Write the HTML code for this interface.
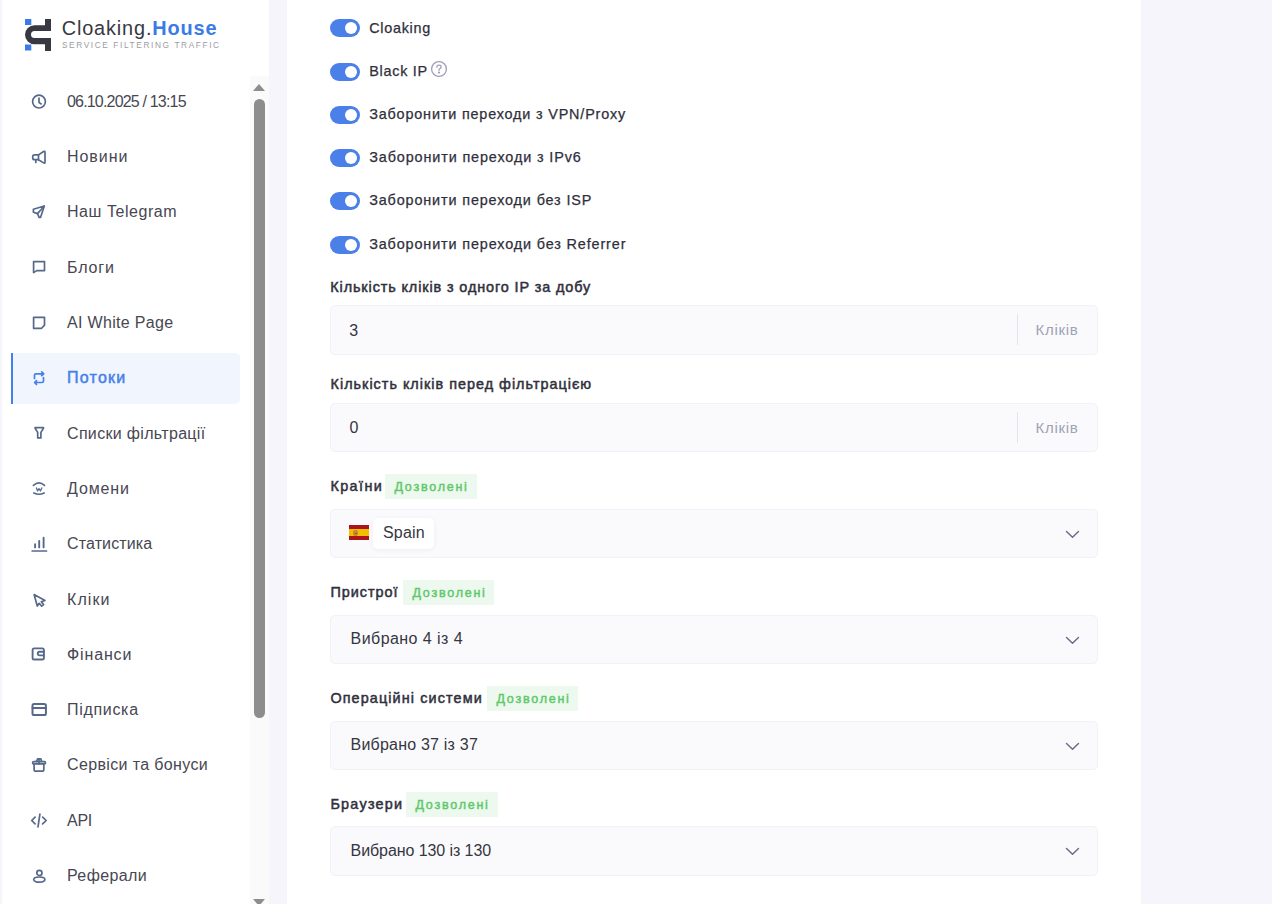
<!DOCTYPE html>
<html><head><meta charset="utf-8">
<style>
*{box-sizing:border-box;margin:0;padding:0}
html,body{width:1272px;height:904px;overflow:hidden;background:#f5f5fb;font-family:"Liberation Sans",sans-serif}
.abs{position:absolute}
.m{position:absolute;white-space:nowrap;line-height:1}
#side{position:absolute;left:2px;top:0;width:267px;height:904px;background:#fff}
#main{position:absolute;left:287px;top:0;width:854px;height:904px;background:#fff}
.track{position:absolute;left:250px;top:76px;width:19px;height:828px;background:#fafafa}
.thumb{position:absolute;left:254px;top:99px;width:11px;height:619px;border-radius:5.5px;background:#8d8d8d}
.nav{color:#474752}
.ico{position:absolute;left:28px;width:22px;height:22px}
.act{position:absolute;left:11px;top:353px;width:229px;height:51px;background:#f0f5fe;border-left:2px solid #4580ea;border-radius:0 5px 5px 0}
.tg{position:absolute;left:330px;width:30px;height:18px;border-radius:9px;background:#4a80e8}
.tg::after{content:"";position:absolute;left:14.6px;top:2.7px;width:12.6px;height:12.6px;border-radius:50%;background:#fff}
.tl{color:#2f2f3b;-webkit-text-stroke:0.25px #2f2f3b}
.lbl{color:#30303c;-webkit-text-stroke:0.5px #30303c}
.badge{position:absolute;background:#edf9ee}
.bdg{color:#5ec86b;-webkit-text-stroke:0.45px #5ec86b}
.inp{position:absolute;left:330px;width:768px;background:#fafafd;border:1px solid #f1f1f7;border-radius:5px}
.val{color:#363641}
.suf{color:#9da2b4}
.logo{color:#373841}
.logo b{font-weight:bold}
.tag{color:#9c9ca3}
</style></head><body>
<div id="side"></div>
<div class="track"></div>
<div class="thumb"></div>
<div class="act"></div>
<div id="main"></div>
<svg class="ico" style="top:90.30px" viewBox="0 0 22 22" fill="none" stroke="#56698a" stroke-width="1.7" stroke-linecap="round" stroke-linejoin="round"><circle cx="11" cy="11.6" r="6.4"/><path d="M11 8.2V12.6L13.2 13.9"/></svg>
<div class="m nav" style="left:67px;top:93.75px;font-size:16px;letter-spacing:-0.818px;">06.10.2025 / 13:15</div>
<svg class="ico" style="top:145.60px" viewBox="0 0 22 22" fill="none" stroke="#56698a" stroke-width="1.7" stroke-linecap="round" stroke-linejoin="round"><path d="M10.5 8.9L15.6 5.5Q17 4.7 17 6.3V16.2Q17 17.8 15.6 16.9L10.5 13.7Z"/><path d="M10.5 8.9H6.6Q4.7 8.9 4.7 10.9V11.7Q4.7 13.7 6.6 13.7H10.5M7.8 13.7V16.4"/></svg>
<div class="m nav" style="left:67px;top:148.75px;font-size:16px;letter-spacing:0.960px;">Новини</div>
<svg class="ico" style="top:200.90px" viewBox="0 0 22 22" fill="none" stroke="#56698a" stroke-width="1.7" stroke-linecap="round" stroke-linejoin="round"><path d="M16.3 5.0L5.4 8.3V11.2L9.5 12.6L11.1 16.3H12.6Z"/><path d="M9.5 12.6L16.1 5.2"/></svg>
<div class="m nav" style="left:67px;top:203.75px;font-size:16px;letter-spacing:0.545px;">Наш Telegram</div>
<svg class="ico" style="top:256.20px" viewBox="0 0 22 22" fill="none" stroke="#56698a" stroke-width="1.7" stroke-linecap="round" stroke-linejoin="round"><path d="M5.6 16.6V5.6H16.5V14.6H8.8Z"/></svg>
<div class="m nav" style="left:67px;top:259.75px;font-size:16px;letter-spacing:0.875px;">Блоги</div>
<svg class="ico" style="top:311.50px" viewBox="0 0 22 22" fill="none" stroke="#56698a" stroke-width="1.7" stroke-linecap="round" stroke-linejoin="round"><path d="M5.6 5.4H16.5V13.1L13.6 16.3H5.6Z"/></svg>
<div class="m nav" style="left:67px;top:314.75px;font-size:16px;letter-spacing:0.325px;">AI White Page</div>
<svg class="ico" style="top:366.80px" viewBox="0 0 22 22" fill="none" stroke="#4580ea" stroke-width="1.7" stroke-linecap="round" stroke-linejoin="round"><path d="M6.5 11.4V8.3Q6.5 6.8 8 6.8H15.6M13.7 4.9L15.7 6.8L13.7 8.7"/><path d="M15.5 10.7V14Q15.5 15.5 14 15.5H6.7M8.5 13.6L6.6 15.5L8.5 17.4"/></svg>
<div class="m nav" style="left:67px;top:369.75px;font-size:16px;color:#4580ea;-webkit-text-stroke:0.5px #4580ea;letter-spacing:1.240px;">Потоки</div>
<svg class="ico" style="top:422.10px" viewBox="0 0 22 22" fill="none" stroke="#56698a" stroke-width="1.7" stroke-linecap="round" stroke-linejoin="round"><path d="M7.1 5.7H15.5V6.3L12.9 10.4V15.9H9.7V10.4L7.1 6.3Z"/></svg>
<div class="m nav" style="left:67px;top:425.75px;font-size:16px;letter-spacing:0.325px;">Списки фільтрації</div>
<svg class="ico" style="top:477.40px" viewBox="0 0 22 22" fill="none" stroke="#56698a" stroke-width="1.7" stroke-linecap="round" stroke-linejoin="round"><path d="M5.4 8.4Q11 3.4 16.5 8.4"/><path d="M5.9 15.9Q11 18.6 16.1 15.9"/><path d="M8.4 10.9L9.6 14L11 11.6L12.4 14L13.8 10.9" stroke-width="1.25"/></svg>
<div class="m nav" style="left:67px;top:480.75px;font-size:16px;letter-spacing:0.880px;">Домени</div>
<svg class="ico" style="top:532.70px" viewBox="0 0 22 22" fill="none" stroke="#56698a" stroke-width="1.7" stroke-linecap="round" stroke-linejoin="round"><path d="M4.2 18H18.5"/><path d="M7.1 11.3V14.4M11.2 7.9V14.4M15.6 4.8V14.4" stroke-width="1.9"/></svg>
<div class="m nav" style="left:67px;top:535.75px;font-size:16px;letter-spacing:0.133px;">Статистика</div>
<svg class="ico" style="top:588.00px" viewBox="0 0 22 22" fill="none" stroke="#56698a" stroke-width="1.7" stroke-linecap="round" stroke-linejoin="round"><path d="M6.1 6.6L17 12.4L13.3 13.7L15.6 16.6L13.7 18.2L11.2 15.3L9.3 18Z"/></svg>
<div class="m nav" style="left:67px;top:591.75px;font-size:16px;letter-spacing:1.075px;">Кліки</div>
<svg class="ico" style="top:643.30px" viewBox="0 0 22 22" fill="none" stroke="#56698a" stroke-width="1.7" stroke-linecap="round" stroke-linejoin="round"><g stroke-width="1.85"><rect x="4.6" y="5.3" width="11.3" height="11.2" rx="1.6"/><path d="M15.9 8.7H11.6A1.85 1.85 0 0 0 11.6 12.4H15.9"/></g></svg>
<div class="m nav" style="left:67px;top:646.75px;font-size:16px;letter-spacing:0.867px;">Фінанси</div>
<svg class="ico" style="top:698.60px" viewBox="0 0 22 22" fill="none" stroke="#56698a" stroke-width="1.7" stroke-linecap="round" stroke-linejoin="round"><g stroke-width="2"><rect x="4.5" y="5.1" width="13.4" height="11.0" rx="1.6"/><path d="M4.5 9.1H17.9"/></g></svg>
<div class="m nav" style="left:67px;top:701.75px;font-size:16px;letter-spacing:0.686px;">Підписка</div>
<svg class="ico" style="top:753.90px" viewBox="0 0 22 22" fill="none" stroke="#56698a" stroke-width="1.7" stroke-linecap="round" stroke-linejoin="round"><rect x="4.6" y="7.6" width="12.9" height="2.3" rx="1.15"/><path d="M6.1 9.9V15.4A1.7 1.7 0 0 0 7.8 17.1H14.1A1.7 1.7 0 0 0 15.8 15.4V9.9"/><path d="M8.5 7.4L9.6 4.8H12.8L13.6 7.4M11 5V9.9"/></svg>
<div class="m nav" style="left:67px;top:756.75px;font-size:16px;letter-spacing:0.363px;">Сервіси та бонуси</div>
<svg class="ico" style="top:809.20px" viewBox="0 0 22 22" fill="none" stroke="#56698a" stroke-width="1.7" stroke-linecap="round" stroke-linejoin="round"><path d="M7.1 8.1L3.7 11.5L7.1 14.9M14.6 8.1L18.2 11.5L14.6 14.9M11.9 5.2L10 17.8"/></svg>
<div class="m nav" style="left:67px;top:812.75px;font-size:16px;letter-spacing:-0.250px;">API</div>
<svg class="ico" style="top:864.50px" viewBox="0 0 22 22" fill="none" stroke="#56698a" stroke-width="1.7" stroke-linecap="round" stroke-linejoin="round"><circle cx="11.4" cy="7.9" r="2.6"/><ellipse cx="11.3" cy="14.6" rx="5.6" ry="2.6"/></svg>
<div class="m nav" style="left:67px;top:867.75px;font-size:16px;letter-spacing:0.386px;">Реферали</div>
<div class="tg" style="top:19.00px"></div>
<div class="m tl" style="left:369.2px;top:21.05px;font-size:14.4px;letter-spacing:0.729px;">Cloaking</div>
<div class="tg" style="top:63.00px"></div>
<div class="m tl" style="left:369.2px;top:64.05px;font-size:14.4px;letter-spacing:0.743px;">Black IP</div>
<div class="tg" style="top:106.00px"></div>
<div class="m tl" style="left:369.2px;top:107.05px;font-size:14.4px;letter-spacing:0.830px;">Заборонити переходи з VPN/Proxy</div>
<div class="tg" style="top:149.00px"></div>
<div class="m tl" style="left:369.2px;top:150.05px;font-size:14.4px;letter-spacing:0.880px;">Заборонити переходи з IPv6</div>
<div class="tg" style="top:192.00px"></div>
<div class="m tl" style="left:369.2px;top:193.05px;font-size:14.4px;letter-spacing:0.862px;">Заборонити переходи без ISP</div>
<div class="tg" style="top:236.00px"></div>
<div class="m tl" style="left:369.2px;top:237.05px;font-size:14.4px;letter-spacing:0.868px;">Заборонити переходи без Referrer</div>
<svg class="abs" style="left:430px;top:60px" width="18" height="18" viewBox="0 0 18 18" fill="none" stroke="#a39dba" stroke-width="1.3"><circle cx="9" cy="9" r="7.4"/><path d="M6.9 7.2Q6.9 5.2 9 5.2Q11.1 5.2 11.1 7Q11.1 8.2 9.6 8.9Q9 9.2 9 10.3" stroke-linecap="round"/><circle cx="9" cy="12.6" r="0.5" fill="#a39dba"/></svg>
<div class="m lbl" style="left:330.3px;top:280.05px;font-size:14.4px;letter-spacing:0.897px;">Кількість кліків з одного IP за добу</div>
<div class="inp" style="top:305px;height:50px"></div>
<div class="m val" style="left:349.3px;top:322.75px;font-size:16px;">3</div>
<div class="abs" style="left:1017px;top:314px;width:1px;height:31px;background:#e3e4ec"></div>
<div class="m suf" style="left:1035.6px;top:322.35px;font-size:15px;letter-spacing:0.700px;">Кліків</div>
<div class="m lbl" style="left:330.6px;top:377.35px;font-size:14.4px;letter-spacing:1.006px;">Кількість кліків перед фільтрацією</div>
<div class="inp" style="top:403px;height:49px"></div>
<div class="m val" style="left:349.5px;top:419.75px;font-size:16px;">0</div>
<div class="abs" style="left:1017px;top:412px;width:1px;height:31px;background:#e3e4ec"></div>
<div class="m suf" style="left:1035.6px;top:419.85px;font-size:15px;letter-spacing:0.700px;">Кліків</div>
<div class="m lbl" style="left:330.4px;top:479.05px;font-size:14.4px;letter-spacing:1.420px;">Країни</div>
<div class="badge" style="left:385px;top:474px;width:92.0px;height:25px"></div>
<div class="m bdg" style="left:394.5px;top:480.60px;font-size:12.5px;letter-spacing:1.763px;">Дозволені</div>
<div class="inp" style="top:509px;height:49px"></div>
<svg class="abs" style="left:1065px;top:529.5px" width="15" height="9" viewBox="0 0 15 9" fill="none" stroke="#646a88" stroke-width="1.4" stroke-linecap="round" stroke-linejoin="round"><path d="M1.5 1.5L7.5 7.3L13.5 1.5"/></svg>
<div class="m lbl" style="left:330.4px;top:585.05px;font-size:14.4px;letter-spacing:0.986px;">Пристрої</div>
<div class="badge" style="left:403px;top:580px;width:90.8px;height:25px"></div>
<div class="m bdg" style="left:412.5px;top:586.60px;font-size:12.5px;letter-spacing:1.763px;">Дозволені</div>
<div class="inp" style="top:615px;height:49px"></div>
<svg class="abs" style="left:1065px;top:635.5px" width="15" height="9" viewBox="0 0 15 9" fill="none" stroke="#646a88" stroke-width="1.4" stroke-linecap="round" stroke-linejoin="round"><path d="M1.5 1.5L7.5 7.3L13.5 1.5"/></svg>
<div class="m val" style="left:350.6px;top:630.75px;font-size:16px;letter-spacing:0.431px;">Вибрано 4 із 4</div>
<div class="m lbl" style="left:330.4px;top:691.05px;font-size:14.4px;letter-spacing:1.112px;">Операційні системи</div>
<div class="badge" style="left:487px;top:686px;width:90.8px;height:25px"></div>
<div class="m bdg" style="left:496.5px;top:692.60px;font-size:12.5px;letter-spacing:1.763px;">Дозволені</div>
<div class="inp" style="top:721px;height:49px"></div>
<svg class="abs" style="left:1065px;top:741.5px" width="15" height="9" viewBox="0 0 15 9" fill="none" stroke="#646a88" stroke-width="1.4" stroke-linecap="round" stroke-linejoin="round"><path d="M1.5 1.5L7.5 7.3L13.5 1.5"/></svg>
<div class="m val" style="left:350.6px;top:736.75px;font-size:16px;letter-spacing:0.207px;">Вибрано 37 із 37</div>
<div class="m lbl" style="left:330.4px;top:797.05px;font-size:14.4px;letter-spacing:1.257px;">Браузери</div>
<div class="badge" style="left:406px;top:792px;width:91.6px;height:25px"></div>
<div class="m bdg" style="left:415.5px;top:798.60px;font-size:12.5px;letter-spacing:1.763px;">Дозволені</div>
<div class="inp" style="top:826px;height:50px"></div>
<svg class="abs" style="left:1065px;top:846.5px" width="15" height="9" viewBox="0 0 15 9" fill="none" stroke="#646a88" stroke-width="1.4" stroke-linecap="round" stroke-linejoin="round"><path d="M1.5 1.5L7.5 7.3L13.5 1.5"/></svg>
<div class="m val" style="left:350.6px;top:842.75px;font-size:16px;letter-spacing:-0.082px;">Вибрано 130 із 130</div>
<div class="abs" style="left:349px;top:525px;width:20px;height:15px;background:linear-gradient(#aa151b 0 26%,#f1bf00 26% 74%,#aa151b 74%)"></div>
<div class="abs" style="left:353px;top:530px;width:5px;height:6px;background:#c66a2a;opacity:.7;border-radius:45%"></div><div class="abs" style="left:355px;top:532.5px;width:1.6px;height:1.6px;background:#3d6aa0;border-radius:50%"></div>
<div class="abs" style="left:373px;top:518px;width:61px;height:30.5px;background:#fff;border-radius:5px;box-shadow:0 1px 5px rgba(30,30,80,.06)"></div>
<div class="m val" style="left:382.9px;top:524.75px;font-size:16px;letter-spacing:0.225px;">Spain</div>
<svg class="abs" style="left:25px;top:19px" width="26" height="32" viewBox="0 0 26 32">
<rect x="0" y="0" width="6.3" height="6" fill="#3b7be6"/>
<rect x="0" y="25.5" width="6.3" height="6" fill="#3b7be6"/>
<path d="M20 0H26V12H9.5A3.4 3.4 0 0 0 9.5 19H26V32H20V25.3H9.5A9.5 9.5 0 0 1 9.5 6.3H20Z" fill="#373841"/>
</svg>
<div class="m logo" style="left:61.7px;top:19.30px;font-size:19.9px;letter-spacing:0.854px;">Cloaking.<b style="color:#3b7be6">House</b></div>
<div class="m tag" style="left:61.9px;top:40.80px;font-size:8.3px;letter-spacing:1.613px;">SERVICE FILTERING TRAFFIC</div>
<div class="abs" style="left:253px;top:84px;width:0;height:0;border-left:6.5px solid transparent;border-right:6.5px solid transparent;border-bottom:7px solid #8d8d8d"></div>
<div class="abs" style="left:253px;top:899px;width:0;height:0;border-left:6.5px solid transparent;border-right:6.5px solid transparent;border-top:7px solid #8d8d8d"></div>
</body></html>
